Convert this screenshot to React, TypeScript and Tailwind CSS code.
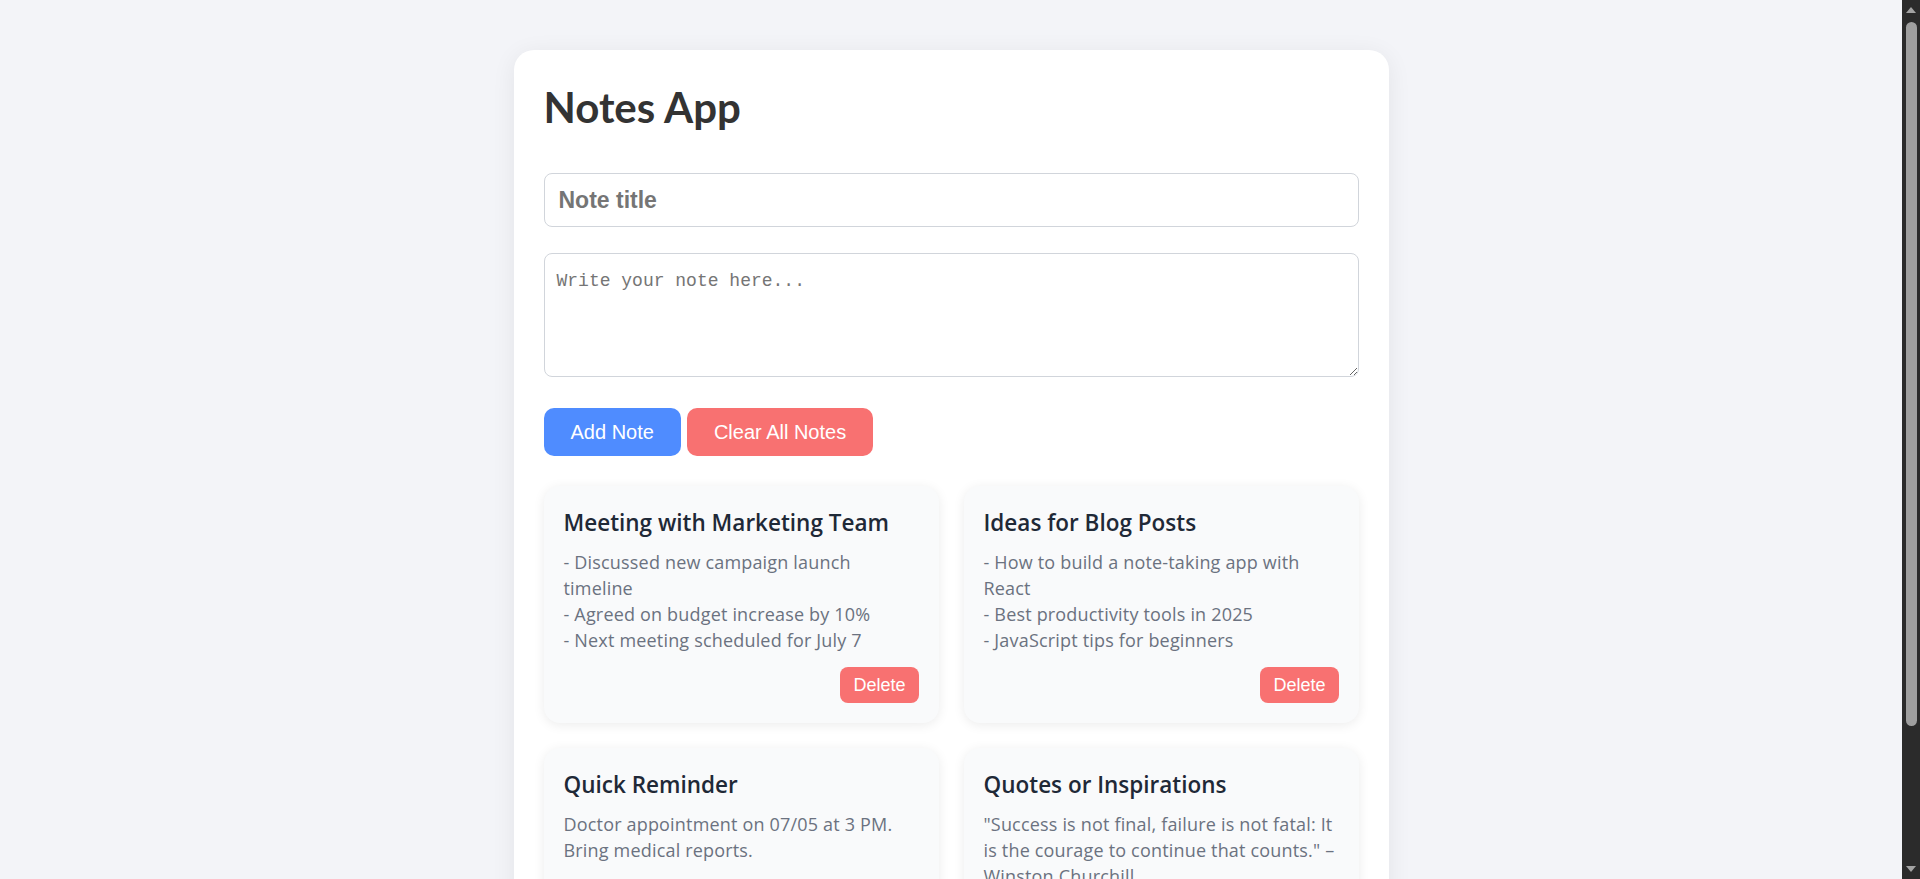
import { useState } from "react";

type Note = { id: number; title: string; body: string };

const start_notes: Note[] = [
  {
    id: 1,
    title: "Meeting with Marketing Team",
    body: "- Discussed new campaign launch timeline\n- Agreed on budget increase by 10%\n- Next meeting scheduled for July 7",
  },
  {
    id: 2,
    title: "Ideas for Blog Posts",
    body: "- How to build a note-taking app with React\n- Best productivity tools in 2025\n- JavaScript tips for beginners",
  },
  {
    id: 3,
    title: "Quick Reminder",
    body: "Doctor appointment on 07/05 at 3 PM. Bring medical reports.",
  },
  {
    id: 4,
    title: "Quotes or Inspirations",
    body: '"Success is not final, failure is not fatal: It is the courage to continue that counts." – Winston Churchill',
  },
];

// dark window scrollbar from the screenshot (the sandbox hides the real one)
const Scroll_bar = () => {
  return (
    <div className="w-[18px] h-screen shrink-0 bg-[#2b2b2b] flex flex-col items-center">
      <svg width="10" height="6" viewBox="0 0 10 6" className="mt-[7px]">
        <path d="M5 0 L10 6 L0 6 Z" fill="#a3a3a3" />
      </svg>
      <div className="w-[11px] h-[704px] mt-[9px] rounded-full bg-[#9f9f9f]"></div>
      <div className="flex-1"></div>
      <svg width="10" height="6" viewBox="0 0 10 6" className="mb-[7px]">
        <path d="M0 0 L10 0 L5 6 Z" fill="#a3a3a3" />
      </svg>
    </div>
  );
};

const App = () => {
  const [notes, setnotes] = useState<Note[]>(start_notes);
  const [title, settitle] = useState("");
  const [body, setbody] = useState("");

  const add_note = () => {
    if (title.trim().length == 0 && body.trim().length == 0) return;
    setnotes([...notes, { id: Date.now(), title, body }]);
    settitle("");
    setbody("");
  };

  return (
    <div className="flex h-screen bg-[#f3f4f8]">
      <div className="flex-1 h-screen overflow-y-auto [scrollbar-width:none]">
        <div className="flex justify-center pt-[50px] pb-[50px]">
          <div className="w-[875px] bg-white rounded-[20px] shadow-[0_4px_24px_rgba(0,0,0,0.07)] p-[30px]">
            <h1 className="font-['Segoe_UI',Lato,sans-serif] font-bold text-[42px] leading-[50px] text-[#333] mt-[2px] mb-[41px]">
              Notes App
            </h1>

            {/* inputs */}
            <input
              type="text"
              value={title}
              onChange={(e) => settitle(e.target.value)}
              placeholder="Note title"
              className="block w-full h-[54px] px-[14px] border border-[#d1d5db] rounded-[8px] font-['Liberation_Sans',Arial,sans-serif] font-bold text-[23px] text-[#333] placeholder:text-[#757575] focus:outline-none"
            />
            <textarea
              value={body}
              onChange={(e) => setbody(e.target.value)}
              placeholder="Write your note here..."
              className="block w-full h-[124px] mt-[26px] pt-[14px] pb-[15px] pl-[12px] pr-[15px] border border-[#d1d5db] rounded-[8px] font-['Liberation_Mono',monospace] text-[18px] text-[#333] placeholder:text-[#757575] focus:outline-none"
            ></textarea>

            <div className="flex gap-[6px] mt-[31px]">
              <button
                className="h-[48px] px-[27px] rounded-[10px] bg-[#4f8cff] text-white font-['Liberation_Sans',Arial,sans-serif] text-[20px]"
                onClick={() => add_note()}
              >
                Add Note
              </button>
              <button
                className="h-[48px] px-[27px] rounded-[10px] bg-[#f87171] text-white font-['Liberation_Sans',Arial,sans-serif] text-[20px]"
                onClick={() => setnotes([])}
              >
                Clear All Notes
              </button>
            </div>

            {/* notes list */}
            <div className="grid grid-cols-2 gap-x-[25px] gap-y-[25px] mt-[30px]">
              {notes.map((n) => (
                <div
                  key={n.id}
                  className="flex flex-col bg-[#f9fafb] rounded-[16px] shadow-[0_2px_12px_rgba(0,0,0,0.08)] p-[20px]"
                >
                  <h3 className="font-['Segoe_UI','Open_Sans',sans-serif] font-semibold text-[22.5px] leading-[34px] text-[#1f2937] mb-[9px]">
                    {n.title}
                  </h3>
                  <p className="font-['Segoe_UI','Open_Sans',sans-serif] text-[18px] tracking-[0.01em] leading-[26px] text-[#6b7280] whitespace-pre-wrap">
                    {n.body}
                  </p>
                  <div className="flex justify-end mt-auto pt-[14px]">
                    <button
                      className="h-[36px] px-[13px] rounded-[8px] bg-[#f87171] text-white font-['Liberation_Sans',Arial,sans-serif] text-[18px]"
                      onClick={() => setnotes(notes.filter((x) => x.id != n.id))}
                    >
                      Delete
                    </button>
                  </div>
                </div>
              ))}
            </div>
          </div>
        </div>
      </div>
      <Scroll_bar />
    </div>
  );
};

export default App;
